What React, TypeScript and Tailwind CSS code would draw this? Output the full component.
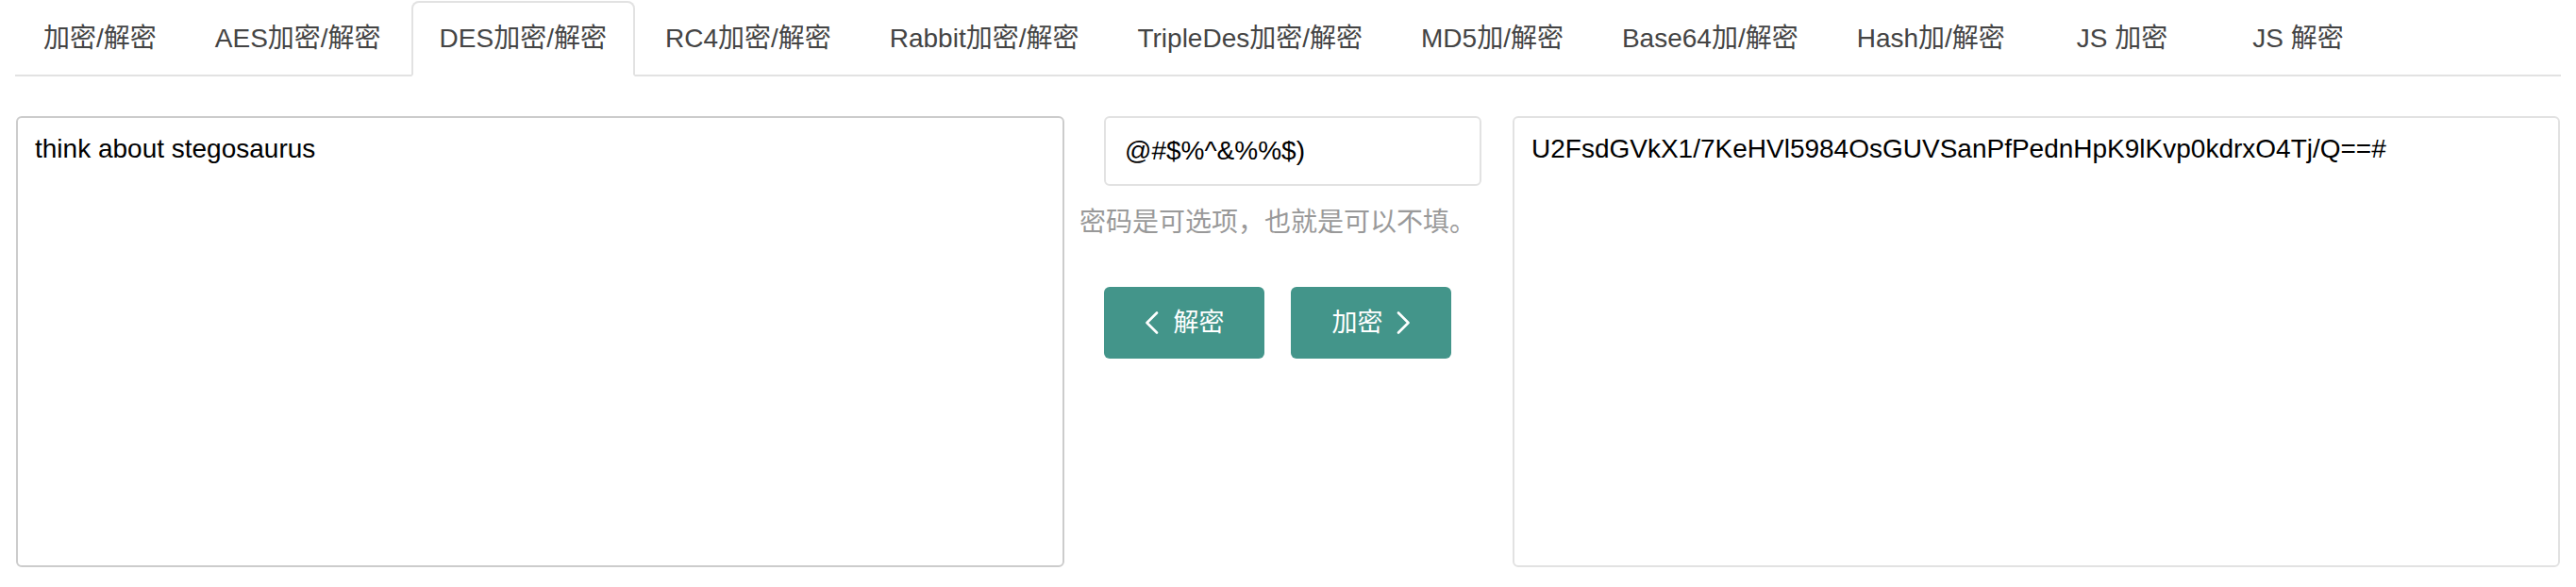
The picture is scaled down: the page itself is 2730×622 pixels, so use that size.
import {useState} from "react";
import clsx from "clsx";

const tabs = [
    "加密/解密",
    "AES加密/解密",
    "DES加密/解密",
    "RC4加密/解密",
    "Rabbit加密/解密",
    "TripleDes加密/解密",
    "MD5加/解密",
    "Base64加/解密",
    "Hash加/解密",
    "JS 加密",
    "JS 解密",
];

const ChevronLeft = () => (
    <svg width="15" height="24" viewBox="0 0 15 24" fill="none">
        <path d="M13 1.5 L2.5 12 L13 22.5" stroke="white" strokeWidth="2.6" strokeLinecap="round" strokeLinejoin="round"/>
    </svg>
)

const ChevronRight = () => (
    <svg width="15" height="24" viewBox="0 0 15 24" fill="none">
        <path d="M2 1.5 L12.5 12 L2 22.5" stroke="white" strokeWidth="2.6" strokeLinecap="round" strokeLinejoin="round"/>
    </svg>
)

const App = () => {
    const [active, setActive] = useState(2);
    const [plain, setPlain] = useState("think about stegosaurus");
    const [pwd, setPwd] = useState("@#$%^&%%$)");
    const [cipher, setCipher] = useState("U2FsdGVkX1/7KeHVl5984OsGUVSanPfPednHpK9lKvp0kdrxO4Tj/Q==#");

    return (
        <div className="bg-white font-['Liberation_Sans','Noto_Sans_CJK_SC',sans-serif]">
            <div className="mx-[16px] pt-[1px] flex border-b-2 border-[#e2e2e2]">
                {tabs.map((t, i) => (
                    <div
                        key={t}
                        onClick={() => setActive(i)}
                        className={clsx(
                            "h-[80px] -mb-[2px] mr-[2px] flex items-center justify-center border-2 rounded-t-[8px] text-[28px] text-[#444] whitespace-nowrap cursor-pointer",
                            i >= 9 ? "px-[42px]" : "px-[28px]",
                            i === active ? "bg-white border-[#e2e2e2] border-b-transparent" : "border-transparent"
                        )}
                    >
                        {t}
                    </div>
                ))}
            </div>

            <div className="flex mt-[42px] ml-[17px]">
                <textarea
                    value={plain}
                    onChange={(e) => setPlain(e.target.value)}
                    className="w-[1111px] h-[478px] border-2 border-[#cccccc] rounded-[6px] pt-[13px] px-[18px] text-[28px] leading-[40px] text-black resize-none outline-none"
                />

                <div className="ml-[42px] w-[400px] flex flex-col">
                    <input
                        value={pwd}
                        onChange={(e) => setPwd(e.target.value)}
                        className="w-full h-[74px] border-2 border-[#e2e2e2] rounded-[6px] px-[20px] text-[28px] text-black outline-none"
                    />
                    <div className="w-[368px] flex flex-col items-center">
                        <div className="mt-[20px] text-[28px] leading-[38px] text-[#999] whitespace-nowrap">
                            密码是可选项，也就是可以不填。
                        </div>
                        <div className="mt-[49px] flex gap-[28px]">
                            <button
                                onClick={() => setPlain(cipher)}
                                className="w-[170px] h-[76px] rounded-[6px] bg-[#43958a] text-white text-[27px] flex items-center justify-center gap-[16px]"
                            >
                                <ChevronLeft/>
                                <span>解密</span>
                            </button>
                            <button
                                onClick={() => setCipher(plain)}
                                className="w-[170px] h-[76px] rounded-[6px] bg-[#43958a] text-white text-[27px] flex items-center justify-center gap-[14px]"
                            >
                                <span>加密</span>
                                <ChevronRight/>
                            </button>
                        </div>
                    </div>
                </div>

                <textarea
                    value={cipher}
                    onChange={(e) => setCipher(e.target.value)}
                    className="ml-[33px] w-[1110px] h-[478px] border-2 border-[#e2e2e2] rounded-[6px] pt-[13px] px-[18px] text-[28px] leading-[40px] text-black resize-none outline-none"
                />
            </div>
        </div>
    )
}

export default App;
